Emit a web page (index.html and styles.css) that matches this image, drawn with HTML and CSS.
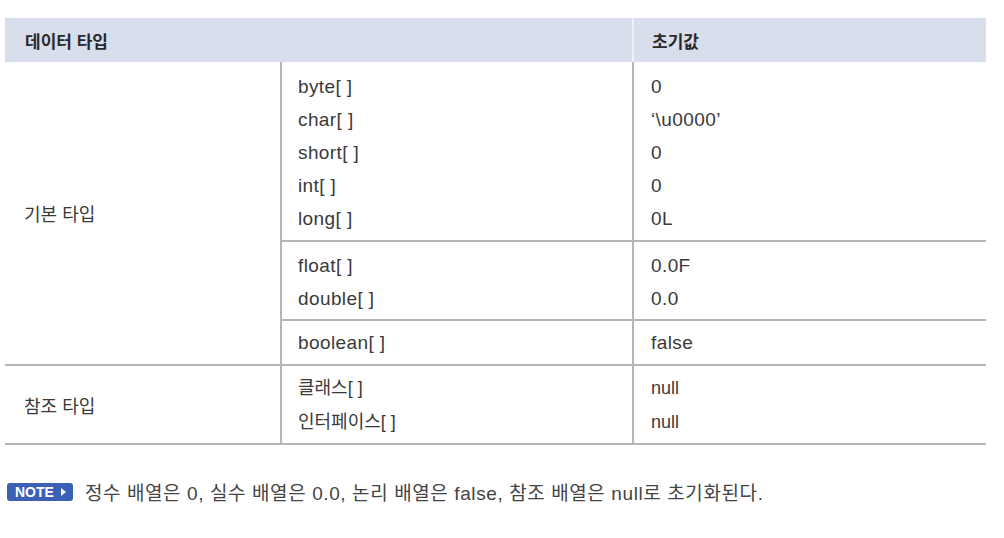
FILE: index.html
```html
<!DOCTYPE html>
<html lang="ko">
<head>
<meta charset="utf-8">
<link rel="stylesheet" href="styles.css">
</head>
<body>
<div class="page">
  <table class="tbl">
    <colgroup>
      <col class="c1"><col class="c2"><col class="c3">
    </colgroup>
    <thead>
      <tr>
        <th colspan="2" class="h-type">데이터 타입</th>
        <th class="h-init">초기값</th>
      </tr>
    </thead>
    <tbody>
      <tr class="g-a">
        <td rowspan="3" class="cat">기본 타입</td>
        <td class="lines">byte[ ]<br>char[ ]<br>short[ ]<br>int[ ]<br>long[ ]</td>
        <td class="lines">0<br>‘\u0000’<br>0<br>0<br>0L</td>
      </tr>
      <tr class="g-b">
        <td class="lines">float[ ]<br>double[ ]</td>
        <td class="lines">0.0F<br>0.0</td>
      </tr>
      <tr class="g-c">
        <td class="lines">boolean[ ]</td>
        <td class="lines">false</td>
      </tr>
      <tr class="g-d">
        <td class="cat">참조 타입</td>
        <td class="lines ref">클래스[ ]<br>인터페이스[ ]</td>
        <td class="lines ref">null<br>null</td>
      </tr>
    </tbody>
  </table>
  <p class="note"><span class="badge">NOTE<span class="tri"></span></span>정수 배열은 0, 실수 배열은 0.0, 논리 배열은 false, 참조 배열은 null로 초기화된다.</p>
</div>
</body>
</html>
```

FILE: styles.css
```css
html, body {
  margin: 0;
  padding: 0;
  background: #ffffff;
}
body {
  font-family: "Liberation Sans", "Noto Sans CJK KR", sans-serif;
  color: #3a3a3a;
}
.page {
  padding: 18px 0 0 5px;
}
.tbl {
  width: 981px;
  border-collapse: collapse;
  table-layout: fixed;
  font-size: 19px;
  letter-spacing: 0.4px;
}
.c1 { width: 276px; }
.c2 { width: 352px; }
.c3 { width: 353px; }
.tbl th {
  background: #d8deec;
  height: 44px;
  padding: 0;
  text-align: left;
  font-family: "Noto Sans CJK KR", sans-serif;
  font-weight: 700;
  font-size: 17px;
  color: #2a2a2a;
  letter-spacing: 0;
}
.h-type { padding-left: 20px !important; }
.h-init {
  padding-left: 18px !important;
  border-left: 2px solid #eef0f7;
}
.tbl td {
  vertical-align: top;
  padding: 0;
}
.cat {
  vertical-align: middle !important;
  padding-left: 19px !important;
  font-family: "Noto Sans CJK KR", sans-serif;
  font-size: 18px;
  letter-spacing: 0;
  border-right: 2px solid #b5b5b5;
}
.lines {
  line-height: 33px;
  padding-left: 16px !important;
}
.tbl td.lines + td.lines {
  border-left: 2px solid #b5b5b5;
  padding-left: 17px !important;
}
.g-a .lines { padding-top: 8px !important; padding-bottom: 5px !important; }
.g-b td { border-top: 2px solid #b5b5b5; }
.g-b .lines { padding-top: 7px !important; padding-bottom: 4px !important; }
.g-c td { border-top: 2px solid #b5b5b5; }
.g-c .lines { padding-top: 5px !important; padding-bottom: 5px !important; }
.g-d td { border-top: 2px solid #b5b5b5; border-bottom: 2px solid #b5b5b5; }
.g-d .lines { padding-top: 5px !important; padding-bottom: 4px !important; line-height: 34px; }
.ref { font-size: 18px; letter-spacing: 0; }
.note {
  margin: 33px 0 0 2px;
  font-family: "Liberation Sans", "Noto Sans CJK KR", sans-serif;
  font-size: 19px;
  color: #444;
  letter-spacing: 0.6px;
  display: flex;
  align-items: center;
}
.badge {
  display: inline-flex;
  align-items: center;
  background: #3c60b5;
  color: #fff;
  font-family: "Liberation Sans", sans-serif;
  font-weight: 700;
  font-size: 14px;
  letter-spacing: 0;
  height: 18px;
  padding: 0 7px 0 8px;
  border-radius: 3px;
  margin-right: 12px;
}
.tri {
  display: inline-block;
  width: 0;
  height: 0;
  margin-left: 7px;
  border-left: 5px solid #fff;
  border-top: 4px solid transparent;
  border-bottom: 4px solid transparent;
}
```
